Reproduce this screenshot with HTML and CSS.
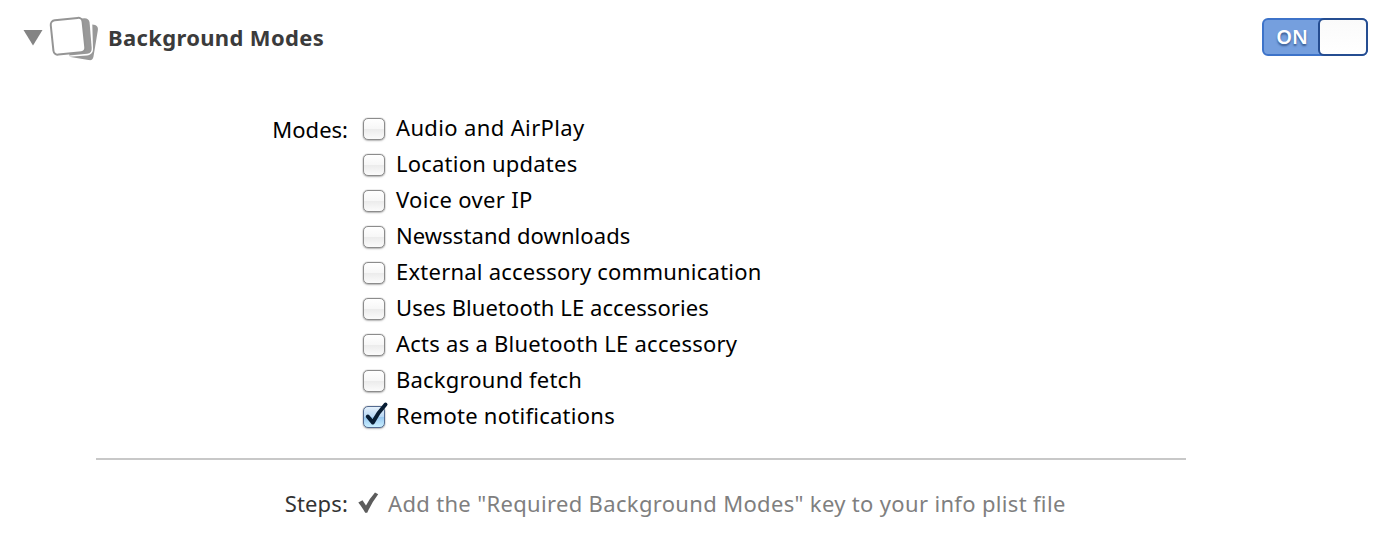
FILE: index.html
```html
<!DOCTYPE html>
<html lang="en">
<head>
<meta charset="utf-8">
<title>Background Modes</title>
<link rel="stylesheet" href="styles.css">
</head>
<body>
<main class="panel">
  <header class="header">
    <svg class="disclosure" width="20" height="16" viewBox="0 0 20 16"><path d="M.5 0h19L10 15.500z" fill="#848484"/></svg>
    <svg class="cards" width="50" height="46" viewBox="0 0 50 46">
      <path d="M32 3.500l3.500-.2c3 0 4.800 1.500 5.100 4.500L42.700 33c.2 3.500-1.200 5.300-4.500 5.800L20 40.500z" fill="#999"/>
      <path d="M43.300 9.500c4.200.2 6.300 2.500 5.500 6L44.500 41.500c-.5 3-2 4.100-5 3.500L20 41.700l18-1.200c4-.5 6.300-3 6-7z" fill="#999"/>
      <rect x="3" y="4" width="32" height="34.500" rx="4.500" transform="rotate(-6 19 21.200)" fill="#fff" stroke="#959595" stroke-width="2"/>
    </svg>
    <h1 class="title">Background Modes</h1>
    <div class="switch"><span class="switch-label">ON</span><span class="knob"></span></div>
  </header>
  <section class="modes">
    <div class="label">Modes:</div>
    <ul class="list">
      <li class="row"><span class="box"></span><span class="text audio">Audio and AirPlay</span></li>
      <li class="row"><span class="box"></span><span class="text location">Location updates</span></li>
      <li class="row"><span class="box"></span><span class="text voip">Voice over IP</span></li>
      <li class="row"><span class="box"></span><span class="text newsstand">Newsstand downloads</span></li>
      <li class="row"><span class="box"></span><span class="text external">External accessory communication</span></li>
      <li class="row"><span class="box"></span><span class="text uses-le">Uses Bluetooth LE accessories</span></li>
      <li class="row"><span class="box"></span><span class="text acts-le">Acts as a Bluetooth LE accessory</span></li>
      <li class="row"><span class="box"></span><span class="text fetch">Background fetch</span></li>
      <li class="row"><span class="box checked"><svg class="tick" width="26" height="26" viewBox="0 0 26 26"><path d="M4.800 15.500l5 6Q15 11.500 22.500 3.500" fill="none" stroke="#081d33" stroke-width="4" stroke-linecap="round" stroke-linejoin="round"/></svg></span><span class="text remote">Remote notifications</span></li>
    </ul>
  </section>
  <hr class="rule">
  <footer class="steps">
    <div class="label steps-label">Steps:</div>
    <svg class="done" width="21" height="22" viewBox="0 0 21 22"><path d="M.3 10.500l4.200-2.200 3.500 5.200Q12 6 17 .5l3.200 1.800Q13.500 11 9.200 20.800H7.200Q4 15 .3 10.500z" fill="#5c5c5c"/></svg>
    <span class="step-text">Add the "Required Background Modes" key to your info plist file</span>
  </footer>
</main>
</body>
</html>
```
FILE: styles.css
```css
body {
  margin: 0;
  background: #fff;
  color: #000;
  font: 22px/36px "Noto Sans", sans-serif;
}

.panel {
  width: 1386px;
  height: 544px;
  overflow: hidden;
}

.header {
  display: flex;
  align-items: center;
  height: 74px;
  padding: 0 18px 0 23px;
}

.disclosure {
  margin-top: 1px;
}

.cards {
  margin: 2px 0 0 6px;
}

.title {
  margin: 0 0 1px 9px;
  color: #3b3b3b;
  font-size: 22px;
  font-weight: 700;
  letter-spacing: .34px;
  white-space: nowrap;
}

.switch {
  display: flex;
  box-sizing: border-box;
  width: 106px;
  height: 38px;
  margin-left: auto;
  border: 2px solid #3d73c9;
  border-radius: 6px;
  background: #759fde;
}

.switch-label {
  width: 56px;
  color: #fff;
  font: 600 20px/34px "Noto Sans", sans-serif;
  text-align: center;
  text-shadow: 0 2px 2px rgba(20, 50, 100, .6);
}

.knob {
  box-sizing: border-box;
  width: 50px;
  height: 38px;
  flex: none;
  margin: -2px;
  border: 2px solid #254d91;
  border-radius: 6px;
  background: linear-gradient(#fafafa, #fff);
}

.modes {
  display: flex;
  height: 349px;
  padding-top: 35px;
}

.label {
  width: 348px;
  margin-top: 2px;
  text-align: right;
}

.list {
  margin: 0;
  padding: 0 0 0 15px;
  list-style: none;
}

.row {
  display: flex;
  align-items: center;
  height: 36px;
}

.box {
  position: relative;
  box-sizing: border-box;
  width: 22px;
  height: 22px;
  margin: 4px 11px 0 0;
  border: 1px solid #8c8c8c;
  border-radius: 5px;
  background: linear-gradient(#fff 0%, #f7f7f7 48%, #ececec 52%, #fbfbfb 100%);
  box-shadow: 0 0 1px rgba(0, 0, 0, .6), 0 1px 2px rgba(0, 0, 0, .25);
}

.checked {
  border-color: #536a90;
  background: linear-gradient(#e4f0fb 0%, #b9d8f4 48%, #98c8f0 52%, #c9efff 100%);
}

.tick {
  position: absolute;
  left: -1px;
  top: -6px;
}

.text,
.step-text {
  white-space: nowrap;
}

.audio { letter-spacing: .36px; }
.location { letter-spacing: .22px; }
.voip { letter-spacing: .32px; }
.newsstand { letter-spacing: .08px; }
.external { letter-spacing: .23px; }
.uses-le { letter-spacing: .08px; }
.acts-le { letter-spacing: .25px; }
.fetch { letter-spacing: .2px; }
.remote { letter-spacing: .26px; }

.rule {
  width: 1090px;
  height: 2px;
  margin: 0 0 0 96px;
  border: 0;
  background: #c8c8c8;
}

.steps {
  display: flex;
  align-items: center;
  height: 36px;
  margin-top: 25px;
}

.steps-label {
  margin: 0;
  color: #333;
  letter-spacing: .15px;
}

.done {
  margin: 0 9px 0 10px;
}

.step-text {
  color: #7f7f7f;
  letter-spacing: .33px;
}
```
